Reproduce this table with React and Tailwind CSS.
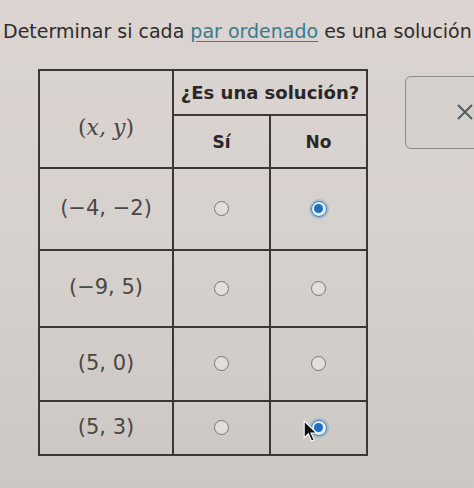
import React from 'react';

const ROWS = [
  { pair: '(−4, −2)', h: 'h-[82px]', pick: 'no' },
  { pair: '(−9, 5)', h: 'h-[77px]', pick: null },
  { pair: '(5, 0)', h: 'h-[74px]', pick: null },
  { pair: '(5, 3)', h: 'h-[54px]', pick: 'cursor' },
];

function Radio({ checked }) {
  if (checked) {
    return (
      <span className="inline-flex w-[16px] h-[16px] rounded-full border border-[#3b82c4] bg-[#e3eef8] items-center justify-center shadow-[0_0_0_2px_rgba(90,150,210,0.35)]">
        <span className="w-[9px] h-[9px] rounded-full bg-[#1f6fbf]" />
      </span>
    );
  }
  return <span className="inline-block w-[15px] h-[15px] rounded-full border-[1.5px] border-[#7a7674] bg-[#e2deda]" />;
}

function Cursor() {
  return (
    <svg className="absolute left-[-8px] top-[0px]" width="17" height="23" viewBox="0 0 16 22">
      <path d="M1 1 L1 17 L5 13 L8 20 L10.5 19 L7.5 12.5 L13 12.5 Z" fill="#111" stroke="#fff" strokeWidth="1" />
    </svg>
  );
}

export default function App() {
  return (
    <div className="relative w-[474px] h-[488px] overflow-hidden bg-gradient-to-b from-[#dbd4d1] via-[#d7d1ce] to-[#ccc7c3] font-['DejaVu_Sans',sans-serif] text-[#2f2d2c]">
      <div className="pt-[17px] pl-[3px] text-[19px] whitespace-nowrap">
        Determinar si cada{' '}
        <span className="text-[#3b7b8f] underline underline-offset-[3px] decoration-[#3b7b8f]">par ordenado</span>{' '}
        es una solución
      </div>

      <div className="flex items-start mt-[23px] ml-[38px]">
        <table className="table-fixed w-[328px] shrink-0 border-collapse border-2 border-[#3a3736] text-center">
          <colgroup>
            <col className="w-[134px]" />
            <col className="w-[97px]" />
            <col className="w-[97px]" />
          </colgroup>
          <thead>
            <tr className="h-[45px]">
              <th rowSpan={2} className="border-2 border-[#3a3736] pt-[18px] font-normal text-[22px] font-['DejaVu_Serif',serif] italic text-[#4a4746]">
                <span className="not-italic">(</span>x, y<span className="not-italic">)</span>
              </th>
              <th colSpan={2} className="border-2 border-[#3a3736] font-bold text-[18px] text-[#2a2827] whitespace-nowrap">¿Es una solución?</th>
            </tr>
            <tr className="h-[53px]">
              <th className="border-2 border-[#3a3736] pt-[4px] font-bold text-[17px] text-[#2a2827]">Sí</th>
              <th className="border-2 border-[#3a3736] pt-[4px] font-bold text-[17px] text-[#2a2827]">No</th>
            </tr>
          </thead>
          <tbody>
            {ROWS.map((r) => (
              <tr key={r.pair} className={r.h}>
                <td className="border-2 border-[#3a3736] text-[21px] text-[#4a4746]">{r.pair}</td>
                <td className="border-2 border-[#3a3736]">
                  <div className="flex justify-center"><Radio /></div>
                </td>
                <td className="border-2 border-[#3a3736]">
                  <div className="flex justify-center">
                    {r.pick === 'cursor' ? (
                      <span className="relative inline-flex">
                        <Radio checked />
                        <Cursor />
                      </span>
                    ) : (
                      <Radio checked={r.pick === 'no'} />
                    )}
                  </div>
                </td>
              </tr>
            ))}
          </tbody>
        </table>

        <div className="ml-[37px] mt-[7px] w-[90px] h-[73px] shrink-0 rounded-[6px] border-[1.5px] border-[#8d8987] bg-[#d6d0cd] flex items-center pl-[50px]">
          <svg width="18" height="18" viewBox="0 0 18 18">
            <path d="M2 2 L16 16 M16 2 L2 16" stroke="#4b5a5e" strokeWidth="1.8" />
          </svg>
        </div>
      </div>
    </div>
  );
}
